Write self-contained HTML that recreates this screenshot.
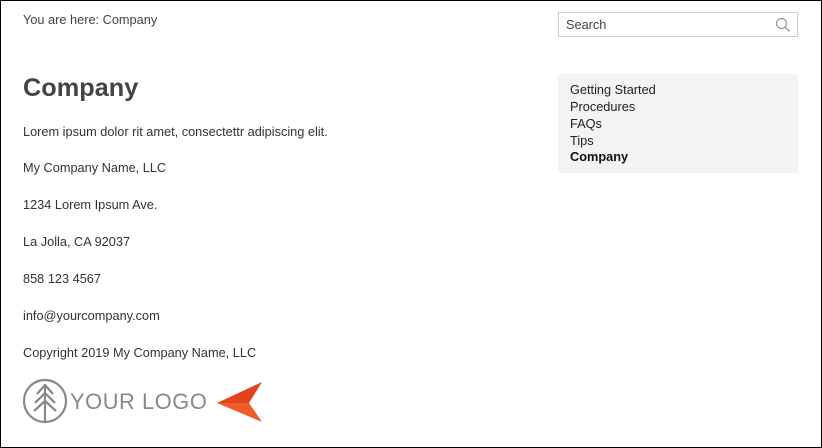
<!DOCTYPE html>
<html><head><style>
body{margin:0;width:822px;height:448px;overflow:hidden;font-family:"Liberation Sans",Arial,sans-serif;color:#333;}
.frame{position:absolute;left:0;top:0;width:820px;height:446px;border:1px solid #000;background:#fff;}
.a{position:absolute;white-space:nowrap;font-size:12.75px;}
h1{position:absolute;left:22px;top:73px;margin:0;font-size:25.3px;font-weight:bold;color:#444;}
.search{position:absolute;left:557px;top:11px;width:238px;height:23px;border:1px solid #ccc;}
.side{position:absolute;left:557px;top:73px;width:240px;height:99px;background:#f2f3f3;}
.side div{position:absolute;left:12px;font-size:12.75px;color:#222;}
</style></head><body><div class="frame">
<div class="a" style="left:22px;top:11px;color:#444">You are here: Company</div>
<h1>Company</h1>
<div class="a" style="left:22px;top:123px">Lorem ipsum dolor rit amet, consectettr adipiscing elit.</div>
<div class="a" style="left:22px;top:159px">My Company Name, LLC</div>
<div class="a" style="left:22px;top:196px">1234 Lorem Ipsum Ave.</div>
<div class="a" style="left:22px;top:233px">La Jolla, CA 92037</div>
<div class="a" style="left:22px;top:270px">858 123 4567</div>
<div class="a" style="left:22px;top:307px">info@yourcompany.com</div>
<div class="a" style="left:22px;top:344px">Copyright 2019 My Company Name, LLC</div>
<div class="search"><span class="a" style="left:7px;top:4px;color:#444">Search</span>
<svg style="position:absolute;left:216px;top:4px" width="16" height="16" viewBox="0 0 16 16"><circle cx="6.5" cy="6.5" r="5" fill="none" stroke="#999" stroke-width="1.2"/><line x1="10" y1="10" x2="14.5" y2="14.5" stroke="#999" stroke-width="1.3"/></svg></div>
<div class="side">
<div style="top:8px">Getting Started</div>
<div style="top:25px">Procedures</div>
<div style="top:42px">FAQs</div>
<div style="top:59px">Tips</div>
<div style="top:75px;font-weight:bold;color:#111">Company</div>
</div>
<svg style="position:absolute;left:21px;top:377px" width="46" height="46" viewBox="0 0 46 46" fill="none" stroke="#888" stroke-width="2.2"><circle cx="23" cy="23" r="21"/><line x1="23" y1="6" x2="23" y2="44"/><path d="M23 7 L15 16 M23 7 L31 16 M23 15 L13 25 M23 15 L33 25 M23 23 L12 33 M23 23 L34 33"/></svg>
<div class="a" style="left:69px;top:388px;font-size:21.8px;color:#888;letter-spacing:0.6px">YOUR LOGO</div>
<svg style="position:absolute;left:215px;top:380px" width="48" height="42" viewBox="0 0 48 42"><path d="M46 1 L1 22 L33 22 Z" fill="#e2431c"/><path d="M1 22 L33 22 L46 41 Z" fill="#f15a29"/></svg>
</div></body></html>
